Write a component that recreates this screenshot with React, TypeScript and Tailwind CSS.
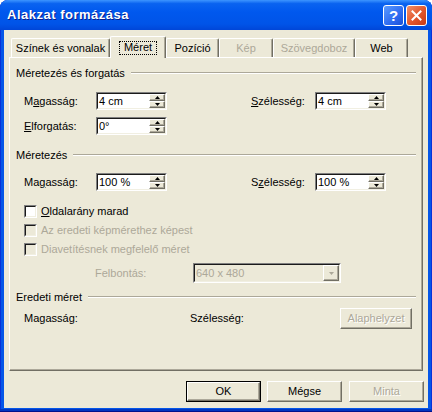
import React from 'react';

const font = "font-['Liberation_Sans',Arial,sans-serif]";

const sunkenOuter = 'border border-t-[#808080] border-l-[#808080] border-r-white border-b-white';
const sunkenInner = 'border border-t-[#1a1a1a] border-l-[#1a1a1a] border-r-[#F1EFE2] border-b-[#F1EFE2]';
const raised = 'border border-t-white border-l-white border-r-[#716F64] border-b-[#716F64] shadow-[inset_-1px_-1px_0_#ACA899]';

function Tri({ up, color = '#000' }: { up?: boolean; color?: string }) {
    return (
        <svg width="5" height="3" viewBox="0 0 5 3" className="block">
            {up ? <path d="M2.5 0 L5 3 L0 3 Z" fill={color} /> : <path d="M0 0 L5 0 L2.5 3 Z" fill={color} />}
        </svg>
    );
}

function SpinBtn({ up }: { up?: boolean }) {
    return (
        <div className={`h-[7px] flex items-center justify-center bg-[#ECE9D8] ${raised}`}>
            <Tri up={up} />
        </div>
    );
}

function SpinField({ value }: { value: string }) {
    return (
        <div className={`w-[71px] h-[18px] ${sunkenOuter}`}>
            <div className={`h-full flex items-center bg-white ${sunkenInner}`}>
                <span className="flex-1 pl-[1px] leading-none">{value}</span>
                <div className="flex flex-col w-[16px] h-[14px]">
                    <SpinBtn up />
                    <SpinBtn />
                </div>
            </div>
        </div>
    );
}

function CheckBox({ disabled }: { disabled?: boolean }) {
    return (
        <div className={`w-[13px] h-[13px] ${sunkenOuter}`}>
            <div className={`h-full ${disabled ? 'bg-[#ECE9D8]' : 'bg-white'} ${sunkenInner}`} />
        </div>
    );
}

function CheckRow({ label, disabled }: { label: React.ReactNode; disabled?: boolean }) {
    return (
        <div className="h-[19px] flex items-center pl-[8px]">
            <CheckBox disabled={disabled} />
            <span className={`ml-[4px] ${disabled ? 'text-[#ACA899]' : ''}`}>{label}</span>
        </div>
    );
}

function Section({ title }: { title: string }) {
    return (
        <div className="h-[14px] flex items-center">
            <span>{title}</span>
            <div className="flex-1 ml-[6px] h-[2px] border-t border-t-[#ACA899] border-b border-b-white" />
        </div>
    );
}

function SizeRow({ left, leftVal, right, rightVal }: { left: React.ReactNode; leftVal: string; right: React.ReactNode; rightVal: string }) {
    return (
        <div className="flex items-center pl-[8px]">
            <span className="w-[72px]">{left}</span>
            <SpinField value={leftVal} />
            <span className="ml-[84px] w-[64px]">{right}</span>
            <SpinField value={rightVal} />
        </div>
    );
}

function Button({ label, w, disabled, isDefault }: { label: string; w: string; disabled?: boolean; isDefault?: boolean }) {
    const text = disabled ? 'text-[#ACA899] [text-shadow:1px_1px_0_#fff]' : '';
    const inner = (
        <div className={`h-full flex items-center justify-center bg-[#ECE9D8] ${raised} ${text}`}>{label}</div>
    );
    return isDefault ? (
        <div className={`${w} h-[21px] border border-black`}>{inner}</div>
    ) : (
        <div className={`${w} h-[21px]`}>{inner}</div>
    );
}

function Tab({ label, w, selected, disabled }: { label: string; w: string; selected?: boolean; disabled?: boolean }) {
    return (
        <div
            className={`${w} ${selected ? 'h-[22px] -mb-[1px] z-10' : 'h-[19px]'} relative flex items-center justify-center bg-[#ECE9D8] rounded-t-[2px] border-t border-l border-r border-t-white border-l-white border-r-[#716F64] shadow-[inset_-1px_0_0_#ACA899] ${disabled ? 'text-[#ACA899]' : ''}`}
        >
            {selected ? (
                <span className="px-[4px] h-[14px] flex items-center border border-dotted border-black">{label}</span>
            ) : (
                <span className="pt-[1px]">{label}</span>
            )}
        </div>
    );
}

export default function App() {
    return (
        <div className={`${font} text-[11px] text-black bg-white w-[432px] h-[412px]`}>
            <div className="w-[432px] h-[412px] flex flex-col rounded-t-[8px] bg-[#0556E8] shadow-[inset_0_-1px_0_#00138C,inset_0_-3px_0_#0036C0,inset_1px_0_0_#0831D9,inset_-1px_0_0_#0831D9]">
                {/* title bar */}
                <div className="h-[30px] flex items-center justify-between pl-[7px] pr-[5px] rounded-t-[8px] bg-[linear-gradient(to_bottom,#3D95FF_0%,#0A63F0_12%,#0058EE_40%,#0054E8_80%,#0046D8_100%)]">
                    <span className="text-white font-bold text-[13px] tracking-[0.5px] [text-shadow:1px_1px_0_#0A1E8C]">Alakzat formázása</span>
                    <div className="flex gap-[2px] mt-[1px]">
                        <div className="w-[21px] h-[21px] rounded-[3px] border border-white flex items-center justify-center bg-[linear-gradient(135deg,#5A9BFF,#2E6BF0_60%,#1A4FD8)]">
                            <span className="text-white font-bold text-[15px] leading-none">?</span>
                        </div>
                        <div className="w-[21px] h-[21px] rounded-[3px] border border-white flex items-center justify-center bg-[linear-gradient(135deg,#F0906A,#E2552C_55%,#C83A15)]">
                            <svg width="11" height="11" viewBox="0 0 11 11">
                                <path d="M1.5 1.5 L9.5 9.5 M9.5 1.5 L1.5 9.5" stroke="#fff" strokeWidth="2" strokeLinecap="square" />
                            </svg>
                        </div>
                    </div>
                </div>

                {/* client area */}
                <div className="flex-1 mx-[4px] mb-[4px] bg-[#ECE9D8] flex flex-col pt-[6px]">
                    <div className="flex items-end h-[21px] ml-[7px]">
                        <Tab label="Színek és vonalak" w="w-[99px]" />
                        <Tab label="Méret" w="w-[56px]" selected />
                        <Tab label="Pozíció" w="w-[53px]" />
                        <Tab label="Kép" w="w-[54px]" disabled />
                        <Tab label="Szövegdoboz" w="w-[82px]" disabled />
                        <Tab label="Web" w="w-[53px]" />
                    </div>

                    <div className="flex-1 mx-[5px] border-t border-l border-t-white border-l-white border-r border-b border-r-[#716F64] border-b-[#716F64] shadow-[inset_-1px_-1px_0_#ACA899] px-[6px] flex flex-col">
                        <div className="mt-[8px]">
                            <Section title="Méretezés és forgatás" />
                        </div>
                        <div className="mt-[12px]">
                            <SizeRow
                                left={<>M<span className="underline">a</span>gasság:</>}
                                leftVal="4 cm"
                                right={<><span className="underline">S</span>zélesség:</>}
                                rightVal="4 cm"
                            />
                        </div>
                        <div className="mt-[7px] flex items-center pl-[8px]">
                            <span className="w-[72px]"><span className="underline">E</span>lforgatás:</span>
                            <SpinField value="0°" />
                        </div>

                        <div className="mt-[13px]">
                            <Section title="Méretezés" />
                        </div>
                        <div className="mt-[11px]">
                            <SizeRow
                                left={<>Ma<span className="underline">g</span>asság:</>}
                                leftVal="100 %"
                                right={<>S<span className="underline">z</span>élesség:</>}
                                rightVal="100 %"
                            />
                        </div>

                        <div className="mt-[11px]">
                            <CheckRow label={<><span className="underline">O</span>ldalarány marad</>} />
                            <CheckRow label="Az eredeti képmérethez képest" disabled />
                            <CheckRow label="Diavetítésnek megfelelő méret" disabled />
                        </div>

                        <div className="mt-[4px] flex items-center pl-[79px]">
                            <span className="w-[98px] text-[#ACA899]">Felbontás:</span>
                            <div className={`w-[148px] h-[20px] ${sunkenOuter}`}>
                                <div className={`h-full flex items-center bg-[#ECE9D8] ${sunkenInner}`}>
                                    <span className="flex-1 pl-[1px] text-[#ACA899]">640 x 480</span>
                                    <div className={`w-[16px] h-[16px] flex items-center justify-center bg-[#ECE9D8] ${raised}`}>
                                        <Tri color="#ACA899" />
                                    </div>
                                </div>
                            </div>
                        </div>

                        <div className="mt-[7px]">
                            <Section title="Eredeti méret" />
                        </div>
                        <div className="mt-[4px] flex items-center pl-[8px]">
                            <span className="w-[166px]">Magasság:</span>
                            <span className="w-[150px]">Szélesség:</span>
                            <Button label="Alaphelyzet" w="w-[72px]" disabled />
                        </div>
                    </div>

                    <div className="mt-[10px] mb-[6px] flex justify-end pr-[4px]">
                        <Button label="OK" w="w-[75px]" isDefault />
                        <div className="ml-[6px]">
                            <Button label="Mégse" w="w-[75px]" />
                        </div>
                        <div className="ml-[7px]">
                            <Button label="Minta" w="w-[75px]" disabled />
                        </div>
                    </div>
                </div>
            </div>
        </div>
    );
}
